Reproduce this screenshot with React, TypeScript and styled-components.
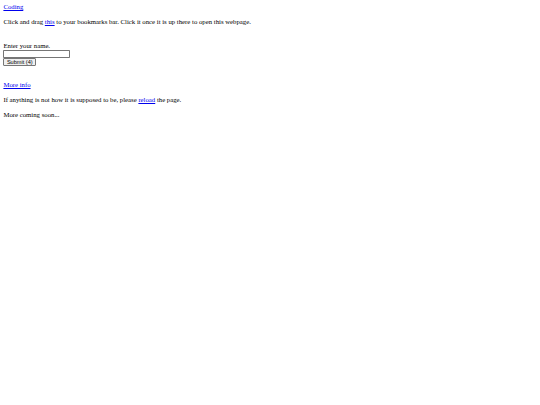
import React from 'react';
import styled, { createGlobalStyle } from 'styled-components';

// the page is shown at 0.421875 of a 1280px wide layout
const GlobalStyle = createGlobalStyle`
  html, body {
    background: #ffffff;
  }
  body {
    margin: 3.4px;
    font-family: "Liberation Serif", "Times New Roman", serif;
    font-size: 6.75px;
    line-height: 8.25px;
    color: #000000;
  }
`;

const Link = styled.a`
  color: #0000ee;
  text-decoration: underline;
  cursor: pointer;
`;

const Para = styled.p`
  margin: 6.75px 0;
`;

const Form = styled.form`
  margin: 0;
`;

const NameInput = styled.input`
  display: inline-block;
  box-sizing: border-box;
  width: 67px;
  height: 8px;
  margin: 0;
  padding: 0 1px;
  border: 0.85px solid #767676;
  border-radius: 0.8px;
  font-family: "Liberation Sans", Arial, sans-serif;
  font-size: 5.6px;
  vertical-align: bottom;
`;

const SubmitButton = styled.button`
  display: inline-block;
  box-sizing: border-box;
  height: 8px;
  margin: 0;
  padding: 0 2.5px;
  border: 0.85px solid #767676;
  border-radius: 1px;
  background: #efefef;
  color: #000000;
  font-family: "Liberation Sans", Arial, sans-serif;
  font-size: 5.6px;
  line-height: 6px;
  vertical-align: bottom;
`;

export default function App() {
  return (
    <>
      <GlobalStyle />
      <Link href="#">Coding</Link>
      <Para>
        Click and drag <Link href="#">this</Link> to your bookmarks bar. Click it once it is up there to
        open this webpage.
      </Para>
      <br />
      <Form onSubmit={(e) => e.preventDefault()}>
        Enter your name.
        <br />
        <NameInput type="text" />
        <br />
        <SubmitButton type="submit">Submit (4)</SubmitButton>
        <br />
        <br />
      </Form>
      <Para>
        <Link href="#">More info</Link>
      </Para>
      <Para>
        If anything is not how it is supposed to be, please <Link href="#">reload</Link> the page.
      </Para>
      <Para>More coming soon...</Para>
    </>
  );
}
